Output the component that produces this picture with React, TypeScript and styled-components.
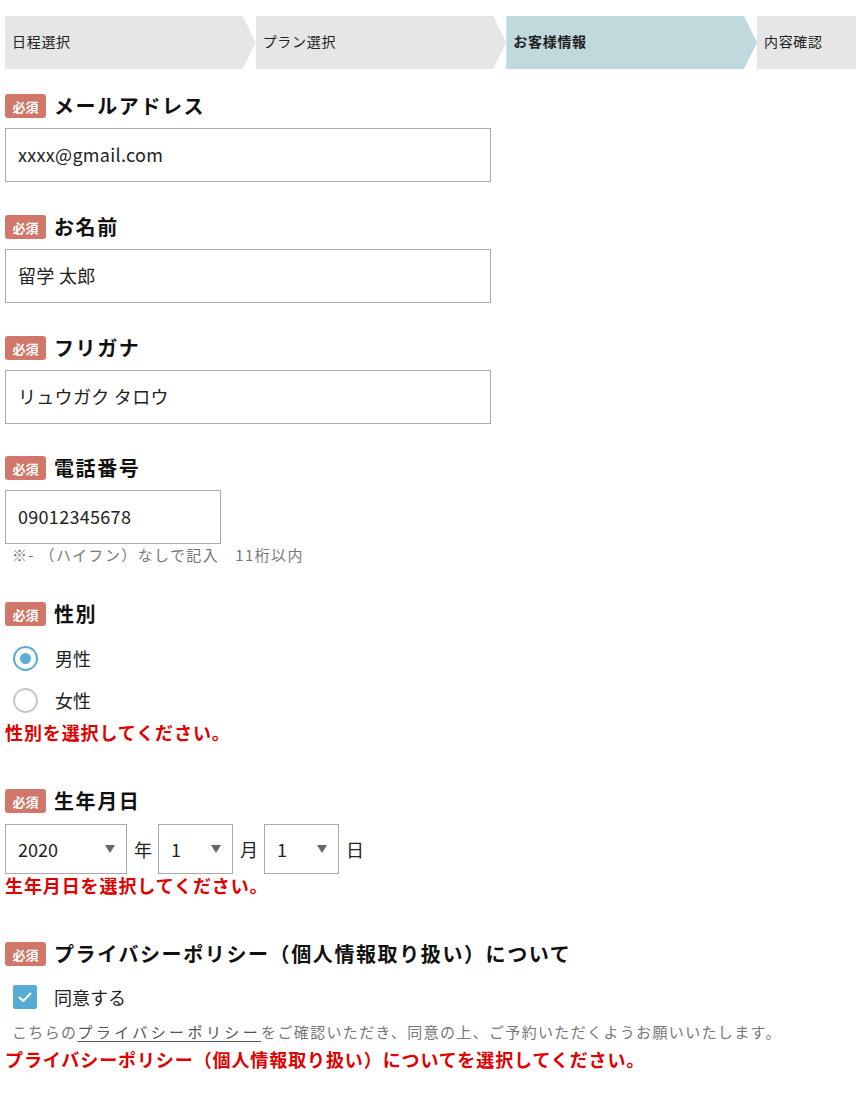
import React from "react";
import styled, { createGlobalStyle } from "styled-components";

const GlobalStyle = createGlobalStyle`
  html, body { margin: 0; padding: 0; background: #fff; }
  body {
    font-family: "Noto Sans CJK JP", "Noto Sans", sans-serif;
    color: #111;
  }
  * { box-sizing: border-box; }
`;

const Page = styled.div`
  width: 856px;
  padding: 16px 0 24px 5px;
`;

const Steps = styled.ol`
  list-style: none;
  margin: 0;
  padding: 0;
  display: flex;
  height: 53px;
  width: 851px;
  overflow: hidden;
`;

const Step = styled.li<{ $active?: boolean }>`
  flex: 0 0 250.67px;
  height: 100%;
  display: flex;
  align-items: center;
  padding: 0 0 3px 7px;
  font-size: 14px;
  letter-spacing: 0.7px;
  line-height: 1;
  color: #222;
  font-weight: ${(p) => (p.$active ? 700 : 400)};
  background: ${(p) => (p.$active ? "#bfd9dd" : "#e6e6e6")};
  clip-path: polygon(0 0, calc(100% - 13px) 0, 100% 50%, calc(100% - 13px) 100%, 0 100%);
`;

const Field = styled.section<{ $mt: number }>`
  margin-top: ${(p) => p.$mt}px;
`;

const LabelRow = styled.div<{ $mb?: number }>`
  display: flex;
  align-items: center;
  gap: 8px;
  height: 24px;
  margin-bottom: ${(p) => (p.$mb ?? 10)}px;
`;

const Badge = styled.span`
  flex: 0 0 41px;
  height: 24px;
  border-radius: 3px;
  background: #d0776a;
  color: #fff;
  font-size: 13px;
  font-weight: 700;
  letter-spacing: 0;
  display: flex;
  align-items: center;
  justify-content: center;
  line-height: 1;
`;

const LabelText = styled.span`
  font-size: 20px;
  font-weight: 700;
  letter-spacing: 1.6px;
  line-height: 1;
  color: #111;
  white-space: nowrap;
`;

const TextBox = styled.div<{ $w: number }>`
  width: ${(p) => p.$w}px;
  height: 54px;
  border: 1px solid #aaa;
  display: flex;
  align-items: center;
  padding: 0 0 3px 12px;
  font-size: 18px;
  color: #222;
  letter-spacing: 0.3px;
`;

const Note = styled.p<{ $mt?: number }>`
  margin: ${(p) => (p.$mt ?? 0)}px 0 0;
  padding-left: 7px;
  font-size: 15px;
  line-height: 20px;
  letter-spacing: 1.35px;
  color: #777;
  white-space: nowrap;
`;

const NoteLink = styled.span`
  color: #555;
  text-decoration: underline;
  text-underline-offset: 3px;
  letter-spacing: 3.4px;
`;

const ChoiceRow = styled.label`
  display: flex;
  align-items: center;
  height: 42px;
  padding-left: 8px;
  gap: 17px;
  font-size: 18px;
  color: #222;
`;

const Radio = styled.span<{ $checked?: boolean }>`
  flex: 0 0 25px;
  height: 25px;
  border-radius: 50%;
  border: 2px solid ${(p) => (p.$checked ? "#5aaed4" : "#c8c8c8")};
  display: flex;
  align-items: center;
  justify-content: center;
  &::after {
    content: "";
    width: 11px;
    height: 11px;
    border-radius: 50%;
    background: ${(p) => (p.$checked ? "#5aaed4" : "transparent")};
  }
`;

const Checkbox = styled.span`
  flex: 0 0 24px;
  height: 24px;
  border-radius: 2px;
  background: #55acd5;
  display: flex;
  align-items: center;
  justify-content: center;
`;

const ErrorText = styled.p<{ $mt?: number }>`
  margin: ${(p) => (p.$mt ?? 0)}px 0 0;
  font-size: 18px;
  font-weight: 700;
  line-height: 22px;
  letter-spacing: 0.9px;
  color: #e00000;
  white-space: nowrap;
`;

const DateRow = styled.div`
  display: flex;
  align-items: center;
  height: 50px;
`;

const SelectBox = styled.div<{ $w: number }>`
  width: ${(p) => p.$w}px;
  height: 50px;
  border: 1px solid #aaa;
  display: flex;
  align-items: center;
  justify-content: space-between;
  padding: 0 11px 0 12px;
  font-size: 18px;
  color: #222;
`;

const Caret = styled.span`
  width: 0;
  height: 0;
  border-left: 5px solid transparent;
  border-right: 5px solid transparent;
  border-top: 8px solid #666;
`;

const Unit = styled.span`
  font-size: 18px;
  color: #222;
  margin: 0 6px 0 7px;
`;

const Label = ({ children, mb }: { children: React.ReactNode; mb?: number }) => (
  <LabelRow $mb={mb}>
    <Badge>必須</Badge>
    <LabelText>{children}</LabelText>
  </LabelRow>
);

export default function App() {
  return (
    <>
      <GlobalStyle />
      <Page>
        <Steps>
          <Step>日程選択</Step>
          <Step>プラン選択</Step>
          <Step $active>お客様情報</Step>
          <Step>内容確認</Step>
        </Steps>

        <Field $mt={25}>
          <Label>メールアドレス</Label>
          <TextBox $w={486}>xxxx@gmail.com</TextBox>
        </Field>

        <Field $mt={33}>
          <Label>お名前</Label>
          <TextBox $w={486}>留学 太郎</TextBox>
        </Field>

        <Field $mt={33}>
          <Label>フリガナ</Label>
          <TextBox $w={486}>リュウガク タロウ</TextBox>
        </Field>

        <Field $mt={32}>
          <Label>電話番号</Label>
          <TextBox $w={216}>09012345678</TextBox>
          <Note $mt={1}>※- （ハイフン）なしで記入　11桁以内</Note>
        </Field>

        <Field $mt={37}>
          <Label mb={11}>性別</Label>
          <ChoiceRow>
            <Radio $checked />
            男性
          </ChoiceRow>
          <ChoiceRow>
            <Radio />
            女性
          </ChoiceRow>
          <ErrorText>性別を選択してください。</ErrorText>
        </Field>

        <Field $mt={46}>
          <Label mb={11}>生年月日</Label>
          <DateRow>
            <SelectBox $w={122}>
              2020
              <Caret />
            </SelectBox>
            <Unit>年</Unit>
            <SelectBox $w={75}>
              1
              <Caret />
            </SelectBox>
            <Unit>月</Unit>
            <SelectBox $w={75}>
              1
              <Caret />
            </SelectBox>
            <Unit>日</Unit>
          </DateRow>
          <ErrorText>生年月日を選択してください。</ErrorText>
        </Field>

        <Field $mt={46}>
          <Label mb={10}>プライバシーポリシー（個人情報取り扱い）について</Label>
          <ChoiceRow>
            <Checkbox>
              <svg width="14" height="11" viewBox="0 0 14 11" fill="none">
                <path d="M1.5 5.5 L5.2 9 L12.5 1.5" stroke="#fff" strokeWidth="2" strokeLinecap="round" strokeLinejoin="round" />
              </svg>
            </Checkbox>
            同意する
          </ChoiceRow>
          <Note $mt={4}>
            こちらの<NoteLink>プライバシーポリシー</NoteLink>をご確認いただき、同意の上、ご予約いただくようお願いいたします。
          </Note>
          <ErrorText $mt={6}>プライバシーポリシー（個人情報取り扱い）についてを選択してください。</ErrorText>
        </Field>
      </Page>
    </>
  );
}
